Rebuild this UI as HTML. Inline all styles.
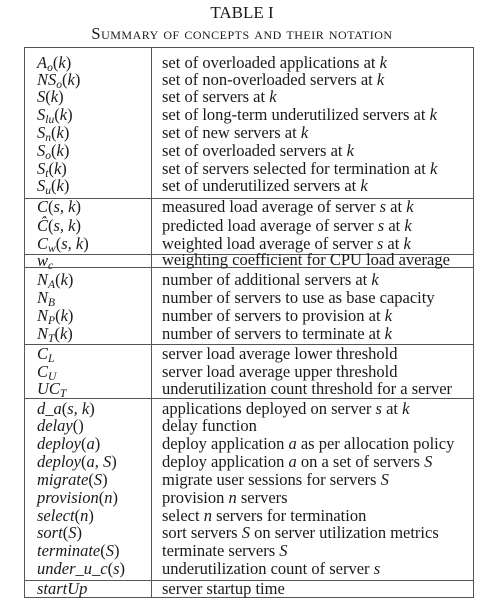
<!DOCTYPE html>
<html><head><meta charset="utf-8"><style>
body{margin:0;width:484px;height:607px;background:#fff;position:relative;font-family:"Liberation Serif",serif;color:#1a1a1a;overflow:hidden}
.t{position:absolute;left:0;width:484px;text-align:center}
.box{position:absolute;left:24px;top:47px;width:450px;height:551px;border:1.3px solid #555;box-sizing:border-box}
.v{position:absolute;left:151px;top:47px;width:1.3px;height:551px;background:#555}
.h{position:absolute;left:24px;width:450px;height:1.3px;background:#555}
.r{position:absolute;height:18px;line-height:18px;font-size:16.5px;white-space:nowrap}
.a{left:37px;font-style:italic}
.b{left:162px}
sub{font-size:70%;vertical-align:-3px;line-height:0}
i{font-style:italic}
.n{font-style:normal}
</style></head><body>
<div class="t" style="top:3px;font-size:17px">TABLE I</div>
<div class="t" style="top:24px;font-size:16.5px;font-variant:small-caps;letter-spacing:0.5px">Summary of concepts and their notation</div>
<div class="box"></div><div class="v"></div>
<div class="h" style="top:198px"></div>
<div class="h" style="top:254px"></div>
<div class="h" style="top:267px"></div>
<div class="h" style="top:344px"></div>
<div class="h" style="top:398px"></div>
<div class="h" style="top:580px"></div>

<div class="r a" style="top:54px">A<sub>o</sub><span class="n">(</span>k<span class="n">)</span></div><div class="r b" style="top:54px">set of overloaded applications at <i>k</i></div>
<div class="r a" style="top:71px">NS<sub>o</sub><span class="n">(</span>k<span class="n">)</span></div><div class="r b" style="top:71px">set of non-overloaded servers at <i>k</i></div>
<div class="r a" style="top:88px">S<span class="n">(</span>k<span class="n">)</span></div><div class="r b" style="top:88px">set of servers at <i>k</i></div>
<div class="r a" style="top:106px">S<sub>lu</sub><span class="n">(</span>k<span class="n">)</span></div><div class="r b" style="top:106px">set of long-term underutilized servers at <i>k</i></div>
<div class="r a" style="top:124px">S<sub>n</sub><span class="n">(</span>k<span class="n">)</span></div><div class="r b" style="top:124px">set of new servers at <i>k</i></div>
<div class="r a" style="top:142px">S<sub>o</sub><span class="n">(</span>k<span class="n">)</span></div><div class="r b" style="top:142px">set of overloaded servers at <i>k</i></div>
<div class="r a" style="top:160px">S<sub>t</sub><span class="n">(</span>k<span class="n">)</span></div><div class="r b" style="top:160px">set of servers selected for termination at <i>k</i></div>
<div class="r a" style="top:177px">S<sub>u</sub><span class="n">(</span>k<span class="n">)</span></div><div class="r b" style="top:177px">set of underutilized servers at <i>k</i></div>
<div class="r a" style="top:198px">C<span class="n">(</span>s, k<span class="n">)</span></div><div class="r b" style="top:198px">measured load average of server <i>s</i> at <i>k</i></div>
<div class="r a" style="top:217px">Ĉ<span class="n">(</span>s, k<span class="n">)</span></div><div class="r b" style="top:217px">predicted load average of server <i>s</i> at <i>k</i></div>
<div class="r a" style="top:235px">C<sub>w</sub><span class="n">(</span>s, k<span class="n">)</span></div><div class="r b" style="top:235px">weighted load average of server <i>s</i> at <i>k</i></div>
<div class="r a" style="top:252px">w<sub>c</sub></div><div class="r b" style="top:251px">weighting coefficient for CPU load average</div>
<div class="r a" style="top:271px">N<sub>A</sub><span class="n">(</span>k<span class="n">)</span></div><div class="r b" style="top:271px">number of additional servers at <i>k</i></div>
<div class="r a" style="top:289px">N<sub>B</sub></div><div class="r b" style="top:289px">number of servers to use as base capacity</div>
<div class="r a" style="top:307px">N<sub>P</sub><span class="n">(</span>k<span class="n">)</span></div><div class="r b" style="top:307px">number of servers to provision at <i>k</i></div>
<div class="r a" style="top:325px">N<sub>T</sub><span class="n">(</span>k<span class="n">)</span></div><div class="r b" style="top:325px">number of servers to terminate at <i>k</i></div>
<div class="r a" style="top:345px">C<sub>L</sub></div><div class="r b" style="top:345px">server load average lower threshold</div>
<div class="r a" style="top:363px">C<sub>U</sub></div><div class="r b" style="top:363px">server load average upper threshold</div>
<div class="r a" style="top:380px">UC<sub>T</sub></div><div class="r b" style="top:380px">underutilization count threshold for a server</div>
<div class="r a" style="top:400px">d_a<span class="n">(</span>s, k<span class="n">)</span></div><div class="r b" style="top:400px">applications deployed on server <i>s</i> at <i>k</i></div>
<div class="r a" style="top:417px">delay<span class="n">()</span></div><div class="r b" style="top:417px">delay function</div>
<div class="r a" style="top:435px">deploy<span class="n">(</span>a<span class="n">)</span></div><div class="r b" style="top:435px">deploy application <i>a</i> as per allocation policy</div>
<div class="r a" style="top:453px">deploy<span class="n">(</span>a, S<span class="n">)</span></div><div class="r b" style="top:453px">deploy application <i>a</i> on a set of servers <i>S</i></div>
<div class="r a" style="top:471px">migrate<span class="n">(</span>S<span class="n">)</span></div><div class="r b" style="top:471px">migrate user sessions for servers <i>S</i></div>
<div class="r a" style="top:489px">provision<span class="n">(</span>n<span class="n">)</span></div><div class="r b" style="top:489px">provision <i>n</i> servers</div>
<div class="r a" style="top:507px">select<span class="n">(</span>n<span class="n">)</span></div><div class="r b" style="top:507px">select <i>n</i> servers for termination</div>
<div class="r a" style="top:524px">sort<span class="n">(</span>S<span class="n">)</span></div><div class="r b" style="top:524px">sort servers <i>S</i> on server utilization metrics</div>
<div class="r a" style="top:542px">terminate<span class="n">(</span>S<span class="n">)</span></div><div class="r b" style="top:542px">terminate servers <i>S</i></div>
<div class="r a" style="top:560px">under_u_c<span class="n">(</span>s<span class="n">)</span></div><div class="r b" style="top:560px">underutilization count of server <i>s</i></div>
<div class="r a" style="top:580px">startUp</div><div class="r b" style="top:580px">server startup time</div>
</body></html>
